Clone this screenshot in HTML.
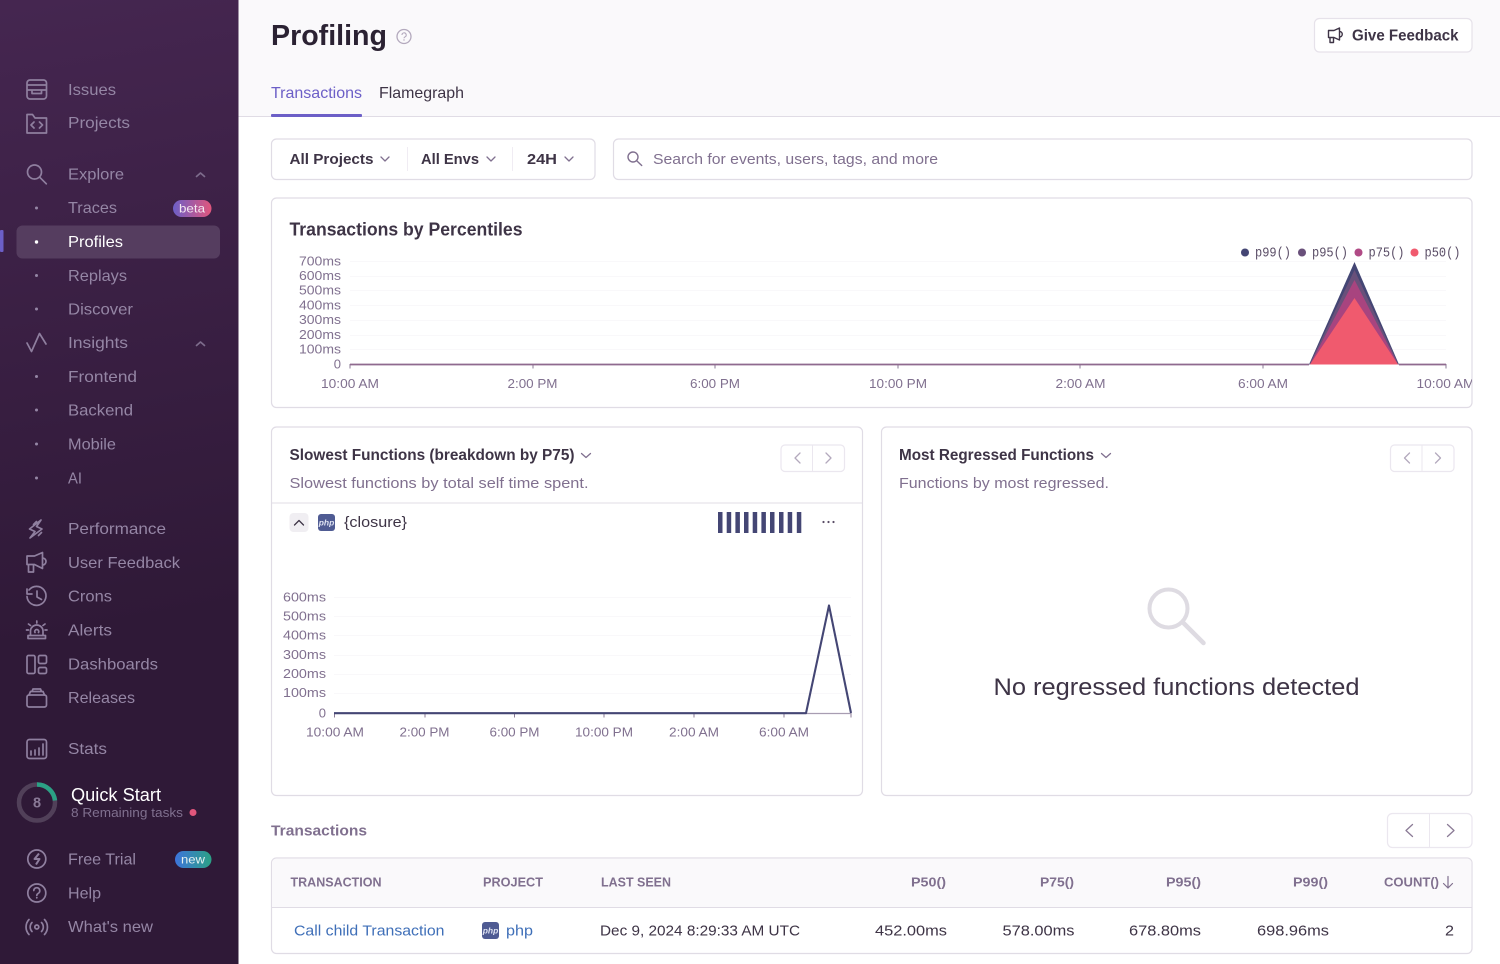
<!DOCTYPE html>
<html><head><meta charset="utf-8"><title>Profiling</title>
<style>
html,body{margin:0;padding:0;width:1500px;height:964px;overflow:hidden;background:#fff}
svg{display:block}
text{font-family:"Liberation Sans",sans-serif}
.n text{font-size:16px;fill:#9586a5}
.ni{fill:none;stroke:#8f7f9f;stroke-width:1.7;stroke-linecap:round;stroke-linejoin:round}
.ax text{font-size:13px;fill:#80708f}
.h text{font-size:12.5px;font-weight:bold;fill:#80708f}
.c text{font-size:15px;fill:#3e3446}
.box{fill:#fff;stroke:#e0dce5;stroke-width:1.2}
.ch{fill:none;stroke:#80708f;stroke-width:1.3;stroke-linecap:round;stroke-linejoin:round}
</style></head><body>
<svg width="1500" height="964" viewBox="0 0 1500 964" xmlns="http://www.w3.org/2000/svg">
<defs><linearGradient id="sb" gradientUnits="userSpaceOnUse" x1="150" y1="620" x2="40" y2="0"><stop offset="0" stop-color="#2f1937"/><stop offset="1" stop-color="#452650"/></linearGradient>
<linearGradient id="beta" x1="0" x2="1"><stop offset="0" stop-color="#6c5fc7"/><stop offset="1" stop-color="#e1567c"/></linearGradient>
<linearGradient id="new" x1="0" x2="1"><stop offset="0" stop-color="#3d74db"/><stop offset="1" stop-color="#2ba185"/></linearGradient></defs>

<rect x="238" y="0" width="1262" height="116" fill="#faf9fb"/>
<rect x="238" y="116" width="1262" height="1" fill="#e0dce5"/>
<rect width="238.500" height="964" fill="url(#sb)"/>

<!-- sidebar -->
<rect x="0" y="230" width="3.5" height="22" rx="1" fill="#6c5fc7"/>
<rect x="16.500" y="225.500" width="203.500" height="33" rx="6" fill="#553d5f"/>
<g class="n">
<text x="68" y="95" textLength="48" lengthAdjust="spacingAndGlyphs">Issues</text>
<text x="68" y="128" textLength="62" lengthAdjust="spacingAndGlyphs">Projects</text>
<text x="68" y="179.500" textLength="56" lengthAdjust="spacingAndGlyphs">Explore</text>
<text x="68" y="213" textLength="49" lengthAdjust="spacingAndGlyphs">Traces</text>
<text x="68" y="247" textLength="55" lengthAdjust="spacingAndGlyphs" style="fill:#fff">Profiles</text>
<text x="68" y="281" textLength="59" lengthAdjust="spacingAndGlyphs">Replays</text>
<text x="68" y="314.500" textLength="65" lengthAdjust="spacingAndGlyphs">Discover</text>
<text x="68" y="348" textLength="60" lengthAdjust="spacingAndGlyphs">Insights</text>
<text x="68" y="382" textLength="69" lengthAdjust="spacingAndGlyphs">Frontend</text>
<text x="68" y="415.500" textLength="65" lengthAdjust="spacingAndGlyphs">Backend</text>
<text x="68" y="449.500" textLength="48" lengthAdjust="spacingAndGlyphs">Mobile</text>
<text x="68" y="483.500" textLength="14" lengthAdjust="spacingAndGlyphs">AI</text>
<text x="68" y="534" textLength="98" lengthAdjust="spacingAndGlyphs">Performance</text>
<text x="68" y="568" textLength="112" lengthAdjust="spacingAndGlyphs">User Feedback</text>
<text x="68" y="601.500" textLength="44" lengthAdjust="spacingAndGlyphs">Crons</text>
<text x="68" y="635.500" textLength="44" lengthAdjust="spacingAndGlyphs">Alerts</text>
<text x="68" y="669.500" textLength="90" lengthAdjust="spacingAndGlyphs">Dashboards</text>
<text x="68" y="703" textLength="67" lengthAdjust="spacingAndGlyphs">Releases</text>
<text x="68" y="754" textLength="39" lengthAdjust="spacingAndGlyphs">Stats</text>
<text x="68" y="864.500" textLength="68" lengthAdjust="spacingAndGlyphs">Free Trial</text>
<text x="68" y="898.500" textLength="33" lengthAdjust="spacingAndGlyphs">Help</text>
<text x="68" y="932" textLength="85" lengthAdjust="spacingAndGlyphs">What's new</text>
</g>
<g fill="#9586a5">
<circle cx="36.500" cy="208" r="1.500"/><circle cx="36.500" cy="275.500" r="1.500"/><circle cx="36.500" cy="309" r="1.500"/><circle cx="36.500" cy="376.500" r="1.500"/><circle cx="36.500" cy="410" r="1.500"/><circle cx="36.500" cy="444" r="1.500"/><circle cx="36.500" cy="478" r="1.500"/>
</g>
<circle cx="36.500" cy="242" r="1.700" fill="#fff"/>
<g class="ni">
<!-- issues -->
<path d="M30 80h13.500a3 3 0 0 1 3 3v13a3 3 0 0 1-3 3H30a3 3 0 0 1-3-3V83a3 3 0 0 1 3-3zM27 85h19.500M27 90h19.500M32 90v3.500h9.500V90"/>
<!-- projects -->
<path d="M27 114.500v18.500h19.500V118H35l-2.500-3.500zM34 122l-3 3 3 3M39.500 122l3 3-3 3"/>
<!-- explore -->
<circle cx="34.500" cy="172" r="7"/><path d="M39.800 177.300l6.500 6.500"/>
<path d="M196.500 176.500l4-3.500 4 3.500" stroke="#7d6c8c"/>
<path d="M196.500 345.500l4-3.500 4 3.500" stroke="#7d6c8c"/>
<!-- insights -->
<path d="M27 343l4.500 8.500 8-18 6.500 10.500"/>
<!-- performance -->
<path d="M41 520l-11.500 9 5.500 2.500-5 6.500 12-9-5.500-2.500zM33.500 524.500l3-3M38.500 535.500l3-3"/>
<!-- user feedback -->
<path d="M27 556h7.500l8-3.500v16l-8-4H27zM42.500 558a3.500 3.500 0 0 1 0 7M28.500 564.500v7.500h5v-7.500"/>
<!-- crons -->
<path d="M29 590a9.500 9.500 0 1 1-2 6.500M27 589v5h5M37 591v6l4.500 2.500"/>
<!-- alerts -->
<path d="M28 638.500h17.500v-3H28zM30.500 635.500v-5a6.300 6.300 0 0 1 12.500 0v5M36.800 621v2M28.500 624l2 1.500M45 624l-2 1.500M26.500 630h2M45 630h2M35 632.500a2 2 0 1 1 3.500 0"/>
<!-- dashboards -->
<rect x="27" y="655.500" width="8" height="18" rx="1.500"/><rect x="38.500" y="655.500" width="8" height="8" rx="1.500"/><rect x="38.500" y="667.500" width="8" height="6" rx="1.500"/>
<!-- releases -->
<rect x="27" y="695" width="19.500" height="12" rx="2"/><path d="M29 695l1.500-3.500h12.500l1.500 3.500M32 691.500l1-2.500h7.500l1 2.500"/>
<!-- stats -->
<rect x="27" y="739.500" width="19.500" height="19" rx="2.500"/><path d="M31 755v-4M35 755v-5M39 755v-7M43 755v-11"/>
<!-- free trial -->
<circle cx="36.800" cy="859" r="9"/>
<!-- help -->
<circle cx="36.800" cy="893" r="9"/><path d="M33.800 890.500a3 3 0 1 1 4.500 2.800c-1 .6-1.500 1.100-1.500 2.200"/>
<!-- whats new -->
<circle cx="36.800" cy="927" r="2"/><path d="M32 922.500a6.500 6.500 0 0 0 0 9M41.500 922.500a6.500 6.500 0 0 1 0 9M29 919.500a11 11 0 0 0 0 15M44.500 919.500a11 11 0 0 1 0 15"/>
</g>
<path d="M39 853.500l-4.500 5.500h5l-3.500 5.500" fill="none" stroke="#8f7f9f" stroke-width="2" stroke-linejoin="round"/>
<circle cx="36.800" cy="897.800" r=".9" fill="#9586a5"/>

<!-- badges -->
<rect x="173" y="200" width="38.500" height="17" rx="8.500" fill="url(#beta)"/>
<text x="192" y="212.500" font-size="12" fill="#f4e8f0" text-anchor="middle" textLength="26" lengthAdjust="spacingAndGlyphs">beta</text>
<rect x="175" y="851" width="36.500" height="17" rx="8.500" fill="url(#new)"/>
<text x="193" y="863.500" font-size="12" fill="#e4f0ef" text-anchor="middle" textLength="24" lengthAdjust="spacingAndGlyphs">new</text>

<!-- quick start -->
<circle cx="37" cy="802.500" r="18" fill="none" stroke="#514059" stroke-width="4.500"/>
<path d="M37 784.500a18 18 0 0 1 18 16" fill="none" stroke="#2ba185" stroke-width="4.500"/>
<text x="37" y="807.500" font-size="14.500" font-weight="bold" fill="#8a7a97" text-anchor="middle">8</text>
<text x="71" y="801" font-size="18" fill="#fff" textLength="90" lengthAdjust="spacingAndGlyphs">Quick Start</text>
<text x="71" y="817" font-size="13" fill="#80708f" textLength="112" lengthAdjust="spacingAndGlyphs">8 Remaining tasks</text>
<circle cx="193" cy="812.500" r="3.500" fill="#e1567c"/>

<!-- header -->
<text x="271" y="45" font-size="29" font-weight="bold" fill="#2b2233" textLength="116" lengthAdjust="spacingAndGlyphs">Profiling</text>
<circle cx="404" cy="36.500" r="7" fill="none" stroke="#b3a9bd" stroke-width="1.300"/>
<path d="M402 35a2.100 2.100 0 1 1 3.100 1.800c-.7.400-1.100.8-1.100 1.500" fill="none" stroke="#b3a9bd" stroke-width="1.100"/>
<circle cx="404" cy="40" r=".7" fill="#b3a9bd"/>
<rect x="1314.500" y="18.500" width="157.500" height="33.500" rx="5" fill="#fff" stroke="#e6e2ea" stroke-width="1.200"/>
<g fill="none" stroke="#3e3446" stroke-width="1.400" stroke-linejoin="round" stroke-linecap="round"><path d="M1328.500 30.500h5.500l5.500-2.500v12l-5.500-2.500h-5.500zM1339.500 31.500a2.700 2.700 0 0 1 0 5.500M1330 37.500v5h3.500v-5"/></g>
<text x="1352" y="40.500" font-size="15.500" font-weight="bold" fill="#3e3446" textLength="106.500" lengthAdjust="spacingAndGlyphs">Give Feedback</text>

<text x="271" y="98" font-size="16" fill="#6c5fc7" textLength="91" lengthAdjust="spacingAndGlyphs">Transactions</text>
<text x="379" y="98" font-size="16" fill="#3e3446" textLength="85" lengthAdjust="spacingAndGlyphs">Flamegraph</text>
<rect x="271" y="114" width="91" height="3" rx="1" fill="#6c5fc7"/>

<!-- filter bar -->
<rect class="box" x="271.500" y="139" width="323.500" height="40.500" rx="5"/>
<text x="289.500" y="164" font-size="15" font-weight="bold" fill="#3e3446" textLength="84" lengthAdjust="spacingAndGlyphs">All Projects</text>
<path class="ch" d="M381 157l4 4 4-4"/>
<rect x="407" y="147" width="1" height="24" fill="#f0ecf3"/>
<text x="421" y="164" font-size="15" font-weight="bold" fill="#3e3446" textLength="58" lengthAdjust="spacingAndGlyphs">All Envs</text>
<path class="ch" d="M487 157l4 4 4-4"/>
<rect x="512" y="147" width="1" height="24" fill="#f0ecf3"/>
<text x="527" y="164" font-size="15" font-weight="bold" fill="#3e3446" textLength="30" lengthAdjust="spacingAndGlyphs">24H</text>
<path class="ch" d="M565 157l4 4 4-4"/>
<rect class="box" x="613.500" y="139" width="858.500" height="40.500" rx="5"/>
<circle cx="633" cy="157" r="5" fill="none" stroke="#80708f" stroke-width="1.400"/><path d="M636.700 160.700l5 4.800" stroke="#80708f" stroke-width="1.400" stroke-linecap="round"/>
<text x="653" y="164" font-size="15" fill="#80708f" textLength="285" lengthAdjust="spacingAndGlyphs">Search for events, users, tags, and more</text>

<!-- card 1 -->
<rect class="box" x="271.500" y="198" width="1200.500" height="209.500" rx="5"/>
<text x="289.500" y="235.500" font-size="18" font-weight="bold" fill="#3e3446" textLength="233" lengthAdjust="spacingAndGlyphs">Transactions by Percentiles</text>
<g stroke="#f9f8fa" stroke-width="1"><path d="M350 261.500h1096M350 276.500h1096M350 290.500h1096M350 305.500h1096M350 320.500h1096M350 335.500h1096M350 349.500h1096"/></g>
<g class="ax" text-anchor="end">
<text x="341" y="265.500" textLength="42" lengthAdjust="spacingAndGlyphs">700ms</text>
<text x="341" y="280" textLength="42" lengthAdjust="spacingAndGlyphs">600ms</text>
<text x="341" y="294.500" textLength="42" lengthAdjust="spacingAndGlyphs">500ms</text>
<text x="341" y="309.500" textLength="42" lengthAdjust="spacingAndGlyphs">400ms</text>
<text x="341" y="324" textLength="42" lengthAdjust="spacingAndGlyphs">300ms</text>
<text x="341" y="339" textLength="42" lengthAdjust="spacingAndGlyphs">200ms</text>
<text x="341" y="353.500" textLength="42" lengthAdjust="spacingAndGlyphs">100ms</text>
<text x="341" y="368.500">0</text>
</g>
<path d="M350 364v4.500M533 364v4.500M715 364v4.500M898 364v4.500M1080 364v4.500M1263 364v4.500M1446 364v4.500" stroke="#8b7b96" stroke-width="1" fill="none"/>
<path d="M350 364.500H1309M1399 364.500H1446" stroke="#8f6a8f" stroke-width="1.700"/>
<path d="M1309 364.500L1354.500 262 1399 364.500z" fill="#444674"/>
<path d="M1309.500 364.500L1354.500 270 1398.500 364.500z" fill="#69507a"/>
<path d="M1310 364.500L1354.500 280 1398 364.500z" fill="#a8447f"/>
<path d="M1310 364.500L1354.500 298 1398 364.500z" fill="#f05a6e"/>
<g class="ax" text-anchor="middle">
<text x="350" y="388" textLength="58" lengthAdjust="spacingAndGlyphs">10:00 AM</text>
<text x="532.500" y="388" textLength="50" lengthAdjust="spacingAndGlyphs">2:00 PM</text>
<text x="715" y="388" textLength="50" lengthAdjust="spacingAndGlyphs">6:00 PM</text>
<text x="898" y="388" textLength="58" lengthAdjust="spacingAndGlyphs">10:00 PM</text>
<text x="1080.500" y="388" textLength="50" lengthAdjust="spacingAndGlyphs">2:00 AM</text>
<text x="1263" y="388" textLength="50" lengthAdjust="spacingAndGlyphs">6:00 AM</text>
</g>
<svg x="1400" y="370" width="72" height="30"><text x="16.500" y="18" font-size="13" fill="#80708f" textLength="58" lengthAdjust="spacingAndGlyphs">10:00 AM</text></svg>
<g font-size="13.500" fill="#3e3446">
<circle cx="1245" cy="252.500" r="4" fill="#444674"/><text x="1255" y="256.500" textLength="36" lengthAdjust="spacingAndGlyphs" style="font-family:'Liberation Mono',monospace;fill:#5a4d66">p99()</text>
<circle cx="1302" cy="252.500" r="4" fill="#69507a"/><text x="1312" y="256.500" textLength="36" lengthAdjust="spacingAndGlyphs" style="font-family:'Liberation Mono',monospace;fill:#5a4d66">p95()</text>
<circle cx="1358.500" cy="252.500" r="4" fill="#b04a85"/><text x="1368.500" y="256.500" textLength="36" lengthAdjust="spacingAndGlyphs" style="font-family:'Liberation Mono',monospace;fill:#5a4d66">p75()</text>
<circle cx="1414.500" cy="252.500" r="4" fill="#f05a6e"/><text x="1424.500" y="256.500" textLength="36" lengthAdjust="spacingAndGlyphs" style="font-family:'Liberation Mono',monospace;fill:#5a4d66">p50()</text>
</g>

<!-- card 2 -->
<rect class="box" x="271.500" y="427" width="591" height="368.500" rx="5"/>
<text x="289.500" y="460" font-size="15.500" font-weight="bold" fill="#3e3446" textLength="285" lengthAdjust="spacingAndGlyphs">Slowest Functions (breakdown by P75)</text>
<path class="ch" d="M581.500 453.500l4.500 4 4.500-4"/>
<text x="289.500" y="488" font-size="15" fill="#80708f" textLength="299" lengthAdjust="spacingAndGlyphs">Slowest functions by total self time spent.</text>
<rect class="box" x="781" y="445" width="63.500" height="26.500" rx="4" style="stroke:#ebe7ef"/>
<path d="M812.500 445v26.500" stroke="#ebe7ef"/>
<path d="M800 453l-5 5 5 5M826 453l5 5-5 5" fill="none" stroke="#b3a9bd" stroke-width="1.300" stroke-linecap="round" stroke-linejoin="round"/>
<rect x="272" y="502.500" width="590" height="1" fill="#e0dce5"/>
<rect x="289.500" y="513" width="19" height="19" rx="4" fill="#f0eef2"/>
<path d="M294.500 525l4.500-4.500 4.500 4.500" fill="none" stroke="#3e3446" stroke-width="1.300" stroke-linecap="round" stroke-linejoin="round"/>
<rect x="318" y="514" width="17" height="17" rx="3" fill="#4f5b93"/>
<text x="326.500" y="525.500" font-size="8.500" font-style="italic" font-weight="bold" fill="#dfe3f2" text-anchor="middle">php</text>
<text x="344" y="527" font-size="15" fill="#3e3446" textLength="63" lengthAdjust="spacingAndGlyphs">{closure}</text>
<g fill="#444674">
<rect x="718" y="512" width="4.500" height="21"/><rect x="726.700" y="512" width="4.500" height="21"/><rect x="735.400" y="512" width="4.500" height="21"/><rect x="744" y="512" width="4.500" height="21"/><rect x="752.700" y="512" width="4.500" height="21"/><rect x="761.400" y="512" width="4.500" height="21"/><rect x="770" y="512" width="4.500" height="21"/><rect x="779" y="512" width="4.500" height="21"/><rect x="787.700" y="512" width="4.500" height="21"/><rect x="796.800" y="512" width="4.500" height="21"/>
</g>
<g fill="#5a4d66"><circle cx="823.500" cy="522" r="1.100"/><circle cx="828.500" cy="522" r="1.100"/><circle cx="833.500" cy="522" r="1.100"/></g>

<g stroke="#f9f8fa"><path d="M334 597.500h517M334 616.500h517M334 635.500h517M334 655.500h517M334 674.500h517M334 693.500h517"/></g>
<g class="ax" text-anchor="end">
<text x="326" y="601.500" textLength="43" lengthAdjust="spacingAndGlyphs">600ms</text>
<text x="326" y="620.500" textLength="43" lengthAdjust="spacingAndGlyphs">500ms</text>
<text x="326" y="639.500" textLength="43" lengthAdjust="spacingAndGlyphs">400ms</text>
<text x="326" y="659" textLength="43" lengthAdjust="spacingAndGlyphs">300ms</text>
<text x="326" y="678" textLength="43" lengthAdjust="spacingAndGlyphs">200ms</text>
<text x="326" y="697" textLength="43" lengthAdjust="spacingAndGlyphs">100ms</text>
<text x="326" y="717.500">0</text>
</g>
<path d="M334.500 713v4.500M425 713v4.500M514.500 713v4.500M604 713v4.500M694 713v4.500M784 713v4.500M851 713v4.500" stroke="#8b7b96" fill="none"/>
<path d="M806 713.500H851" stroke="#a89db2" stroke-width="1.200"/>
<path d="M334 713.200L806 713.200L829 605.500L851 713" fill="none" stroke="#444674" stroke-width="2.100" stroke-linejoin="round"/>
<g class="ax" text-anchor="middle">
<text x="335" y="736.500" textLength="58" lengthAdjust="spacingAndGlyphs">10:00 AM</text>
<text x="424.500" y="736.500" textLength="50" lengthAdjust="spacingAndGlyphs">2:00 PM</text>
<text x="514.500" y="736.500" textLength="50" lengthAdjust="spacingAndGlyphs">6:00 PM</text>
<text x="604" y="736.500" textLength="58" lengthAdjust="spacingAndGlyphs">10:00 PM</text>
<text x="694" y="736.500" textLength="50" lengthAdjust="spacingAndGlyphs">2:00 AM</text>
<text x="784" y="736.500" textLength="50" lengthAdjust="spacingAndGlyphs">6:00 AM</text>
</g>

<!-- card 3 -->
<rect class="box" x="881.500" y="427" width="590.500" height="368.500" rx="5"/>
<text x="899" y="460" font-size="15.500" font-weight="bold" fill="#3e3446" textLength="195" lengthAdjust="spacingAndGlyphs">Most Regressed Functions</text>
<path class="ch" d="M1101.500 453.500l4.500 4 4.500-4"/>
<text x="899" y="488" font-size="15" fill="#80708f" textLength="210" lengthAdjust="spacingAndGlyphs">Functions by most regressed.</text>
<rect class="box" x="1390.500" y="445" width="63.500" height="26.500" rx="4" style="stroke:#ebe7ef"/>
<path d="M1422 445v26.500" stroke="#ebe7ef"/>
<path d="M1409.500 453l-5 5 5 5M1435.500 453l5 5-5 5" fill="none" stroke="#b3a9bd" stroke-width="1.300" stroke-linecap="round" stroke-linejoin="round"/>
<circle cx="1168.500" cy="608.500" r="19" fill="none" stroke="#dedbe2" stroke-width="4"/>
<path d="M1182.500 622l21 21" stroke="#dedbe2" stroke-width="4.500" stroke-linecap="round"/>
<text x="993.500" y="695" font-size="24.500" fill="#3e3446" textLength="366" lengthAdjust="spacingAndGlyphs">No regressed functions detected</text>

<!-- transactions -->
<text x="271" y="835.500" font-size="15" font-weight="bold" fill="#80708f" textLength="96" lengthAdjust="spacingAndGlyphs">Transactions</text>
<rect class="box" x="1387.500" y="813.500" width="84.500" height="34" rx="5" style="stroke:#ebe7ef"/>
<path d="M1429.500 813.500v34" stroke="#ebe7ef"/>
<path d="M1412.500 824.500l-6.500 6 6.500 6M1447.500 824.500l6.500 6-6.500 6" fill="none" stroke="#8b7b96" stroke-width="1.300" stroke-linecap="round" stroke-linejoin="round"/>
<rect class="box" x="271.500" y="858" width="1200.500" height="95.500" rx="5"/>
<path d="M272 907V863a4.500 4.500 0 0 1 4.500-4.500H1467a4.500 4.500 0 0 1 4.500 4.500V907z" fill="#faf9fb"/>
<rect x="272" y="907" width="1199.500" height="1" fill="#e0dce5"/>
<g class="h">
<text x="290.500" y="886.500" textLength="91" lengthAdjust="spacingAndGlyphs">TRANSACTION</text>
<text x="483" y="886.500" textLength="60" lengthAdjust="spacingAndGlyphs">PROJECT</text>
<text x="601" y="886.500" textLength="70" lengthAdjust="spacingAndGlyphs">LAST SEEN</text>
<text x="911" y="886.500" textLength="35" lengthAdjust="spacingAndGlyphs">P50()</text>
<text x="1040" y="886.500" textLength="34" lengthAdjust="spacingAndGlyphs">P75()</text>
<text x="1166" y="886.500" textLength="35" lengthAdjust="spacingAndGlyphs">P95()</text>
<text x="1293" y="886.500" textLength="35" lengthAdjust="spacingAndGlyphs">P99()</text>
<text x="1384" y="886.500" textLength="55" lengthAdjust="spacingAndGlyphs">COUNT()</text>
</g>
<path d="M1448 876.500v11.500M1443.500 883.500l4.500 4.500 4.500-4.500" fill="none" stroke="#80708f" stroke-width="1.200" stroke-linecap="round" stroke-linejoin="round"/>
<g class="c">
<text x="294" y="935.500" textLength="150.500" lengthAdjust="spacingAndGlyphs" style="fill:#3f6fb8">Call child Transaction</text>
<text x="506" y="935.500" textLength="27" lengthAdjust="spacingAndGlyphs" style="fill:#3f6fb8">php</text>
<text x="600" y="935.500" textLength="200" lengthAdjust="spacingAndGlyphs">Dec 9, 2024 8:29:33 AM UTC</text>
<text x="875" y="935.500" textLength="72" lengthAdjust="spacingAndGlyphs">452.00ms</text>
<text x="1002.500" y="935.500" textLength="72" lengthAdjust="spacingAndGlyphs">578.00ms</text>
<text x="1129" y="935.500" textLength="72" lengthAdjust="spacingAndGlyphs">678.80ms</text>
<text x="1257" y="935.500" textLength="72" lengthAdjust="spacingAndGlyphs">698.96ms</text>
<text x="1445" y="935.500" textLength="9" lengthAdjust="spacingAndGlyphs">2</text>
</g>
<rect x="482" y="922" width="17" height="17" rx="3" fill="#4f5b93"/>
<text x="490.500" y="933.500" font-size="8.500" font-style="italic" font-weight="bold" fill="#dfe3f2" text-anchor="middle">php</text>
</svg>
</body></html>
